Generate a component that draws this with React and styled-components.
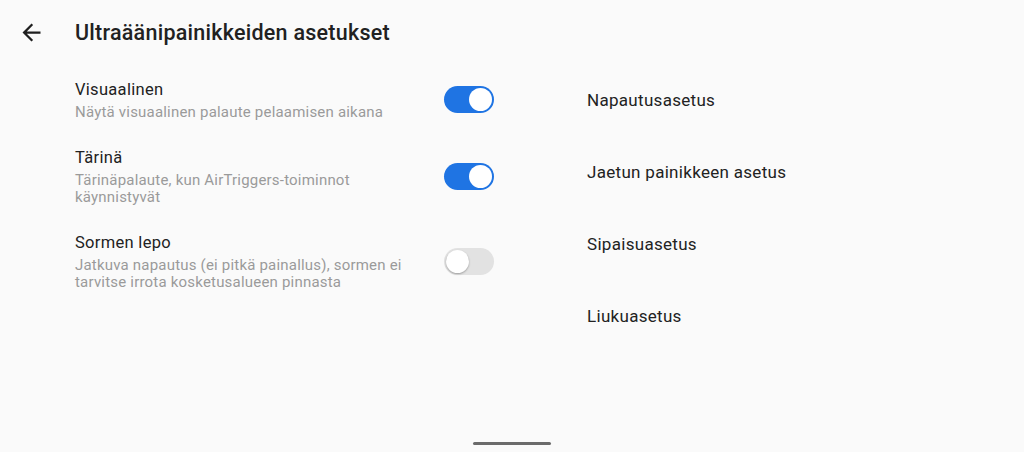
import React from "react";
import styled, { createGlobalStyle } from "styled-components";

const Global = createGlobalStyle`
  html, body { margin: 0; padding: 0; background: #fafafa; }
  body { font-family: Roboto, "Noto Sans", "Liberation Sans", sans-serif; -webkit-font-smoothing: antialiased; }
`;

const Page = styled.div`
  width: 1024px;
  height: 452px;
  display: flex;
  flex-direction: column;
  background: #fafafa;
  overflow: hidden;
`;

const Header = styled.div`
  height: 64px;
  display: flex;
  align-items: center;
  flex-shrink: 0;
`;

const BackButton = styled.button`
  width: 75px;
  height: 64px;
  padding: 0 0 0 18px;
  border: none;
  background: none;
  display: flex;
  align-items: center;
  color: #1f1f1f;
  cursor: pointer;
`;

const Title = styled.h1`
  margin: 0;
  font-size: 21.5px;
  font-weight: 500;
  color: #212121;
  letter-spacing: 0.25px;
`;

const Content = styled.div`
  display: flex;
  padding: 1px 0 0 75px;
  flex: 1;
`;

const LeftColumn = styled.div`
  width: 419px;
  display: flex;
  flex-direction: column;
`;

const Row = styled.div`
  display: flex;
  align-items: center;
  justify-content: space-between;
  padding: 13.5px 0;
`;

const TextBlock = styled.div`
  width: 345px;
  display: flex;
  flex-direction: column;
  gap: 3px;
`;

const RowTitle = styled.div`
  font-size: 16.5px;
  line-height: 22px;
  letter-spacing: 0.3px;
  color: #222;
`;

const RowSubtitle = styled.div`
  font-size: 15px;
  line-height: 16.5px;
  letter-spacing: 0.2px;
  color: #9a9a9a;
`;

const Track = styled.div`
  width: 50px;
  height: 27px;
  border-radius: 14px;
  background: ${(p) => (p.$on ? "#1f74e3" : "#e2e2e2")};
  display: flex;
  align-items: center;
  justify-content: ${(p) => (p.$on ? "flex-end" : "flex-start")};
  padding: 0 2px;
  box-sizing: border-box;
  flex-shrink: 0;
`;

const Thumb = styled.div`
  width: 23px;
  height: 23px;
  border-radius: 50%;
  background: #fff;
  box-shadow: ${(p) => (p.$on ? "none" : "0 1px 2px rgba(0,0,0,0.3)")};
`;

const RightColumn = styled.div`
  margin-left: 93px;
  margin-top: -1px;
  display: flex;
  flex-direction: column;
`;

const MenuItem = styled.div`
  height: 72px;
  display: flex;
  align-items: center;
  font-size: 17px;
  letter-spacing: 0.3px;
  color: #222;
`;

const HomeBar = styled.div`
  width: 78px;
  height: 3px;
  border-radius: 2px;
  background: #6b6b6b;
  align-self: center;
  margin-bottom: 7px;
  flex-shrink: 0;
`;

const Toggle = ({ on }) => (
  <Track $on={on}>
    <Thumb $on={on} />
  </Track>
);

const settings = [
  { title: "Visuaalinen", sub: "Näytä visuaalinen palaute pelaamisen aikana", on: true },
  { title: "Tärinä", sub: "Tärinäpalaute, kun AirTriggers-toiminnot käynnistyvät", on: true },
  {
    title: "Sormen lepo",
    sub: "Jatkuva napautus (ei pitkä painallus), sormen ei tarvitse irrota kosketusalueen pinnasta",
    on: false,
  },
];

const menu = ["Napautusasetus", "Jaetun painikkeen asetus", "Sipaisuasetus", "Liukuasetus"];

export default function App() {
  return (
    <>
      <Global />
      <Page>
        <Header>
          <BackButton aria-label="Takaisin">
            <svg width="27" height="27" viewBox="0 0 24 24" fill="currentColor">
              <path d="M20 11H7.83l5.59-5.59L12 4l-8 8 8 8 1.41-1.41L7.83 13H20v-2z" />
            </svg>
          </BackButton>
          <Title>Ultraäänipainikkeiden asetukset</Title>
        </Header>
        <Content>
          <LeftColumn>
            {settings.map((s) => (
              <Row key={s.title}>
                <TextBlock>
                  <RowTitle>{s.title}</RowTitle>
                  <RowSubtitle>{s.sub}</RowSubtitle>
                </TextBlock>
                <Toggle on={s.on} />
              </Row>
            ))}
          </LeftColumn>
          <RightColumn>
            {menu.map((m) => (
              <MenuItem key={m}>{m}</MenuItem>
            ))}
          </RightColumn>
        </Content>
        <HomeBar />
      </Page>
    </>
  );
}
